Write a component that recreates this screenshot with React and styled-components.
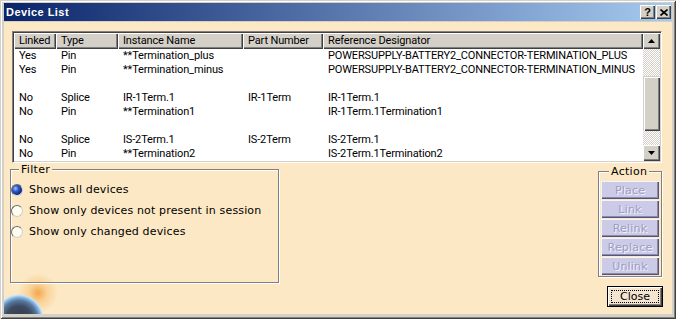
import React from 'react';
import styled, { createGlobalStyle } from 'styled-components';

const Global = createGlobalStyle`
  html, body { margin: 0; padding: 0; background: #ffffff; }
  body { font-family: "DejaVu Sans", sans-serif; }
  * { box-sizing: border-box; }
`;

const COLS = '42px 62px 125px 80px 320px';

const Window = styled.div`
  width: 676px;
  height: 319px;
  padding: 3px 4px 5px 4px;
  background: #d4d0c8;
  box-shadow: inset 1px 1px 0 #d4d0c8, inset -1px -1px 0 #404040,
    inset 2px 2px 0 #ffffff, inset -2px -2px 0 #808080;
  display: flex;
  flex-direction: column;
`;

const TitleBar = styled.div`
  height: 18px;
  margin-bottom: 1px;
  display: flex;
  align-items: center;
  gap: 1px;
  padding: 0 1px 0 2px;
  background: linear-gradient(to right, #0a246a, #a6caf0);
`;

const Title = styled.div`
  flex: 1;
  color: #ffffff;
  font: bold 11px "Liberation Sans", Arial, sans-serif;
  letter-spacing: 0.45px;
`;

const CaptionButton = styled.div`
  width: 15px;
  height: 14px;
  display: grid;
  place-items: center;
  background: #d4d0c8;
  box-shadow: inset 1px 1px 0 #ffffff, inset -1px -1px 0 #404040,
    inset -2px -2px 0 #808080;
  font: bold 11px "Liberation Sans", Arial, sans-serif;
  color: #000;
  line-height: 14px;
`;

const Client = styled.div`
  flex: 1;
  display: flex;
  flex-direction: column;
  background-color: #fce8c5;
  background-image:
    radial-gradient(circle 25px at 15px 297px, #343a46 0, #3e4a60 52%, #56789f 74%, #86b6e0 87%, #c4e4f8 95%, rgba(252,232,197,0) 100%),
    radial-gradient(circle 20px at 34px 271px, rgba(242,150,45,0.8) 0, rgba(247,188,105,0.5) 45%, rgba(252,232,197,0) 100%);
  background-repeat: no-repeat;
`;

const ListBox = styled.div`
  margin: 9px 0 0 8px;
  width: 650px;
  height: 132px;
  padding: 1px;
  border: 1px solid;
  border-color: #808080 #ffffff #ffffff #808080;
  box-shadow: inset 1px 1px 0 #404040, inset -1px -1px 0 #d4d0c8;
  background: #ffffff;
  display: flex;
  overflow: hidden;
`;

const Table = styled.div`
  flex: 1;
  display: flex;
  flex-direction: column;
  overflow: hidden;
  font: 11px Roboto, "Liberation Sans", sans-serif;
  letter-spacing: -0.15px;
  color: #000;
`;

const HeaderRow = styled.div`
  display: grid;
  grid-template-columns: ${COLS};
  height: 16px;
  flex: none;
`;

const HeaderCell = styled.div`
  background: #d4d0c8;
  box-shadow: inset 1px 1px 0 #ffffff, inset -1px -1px 0 #404040,
    inset -2px -2px 0 #808080;
  line-height: 16px;
  padding-left: 5px;
  white-space: nowrap;
  overflow: hidden;
`;

const Row = styled.div`
  display: grid;
  grid-template-columns: ${COLS};
  height: 14px;
  line-height: 14px;
  flex: none;
`;

const Cell = styled.div`
  padding-left: 5px;
  white-space: nowrap;
  overflow: visible;
`;

const ScrollBar = styled.div`
  width: 17px;
  display: flex;
  flex-direction: column;
`;

const ScrollButton = styled.div`
  height: 16px;
  flex: none;
  display: grid;
  place-items: center;
  background: #d4d0c8;
  box-shadow: inset 1px 1px 0 #ffffff, inset -1px -1px 0 #404040,
    inset -2px -2px 0 #808080;
`;

const Track = styled.div`
  flex: 1;
  background-color: #ffffff;
  background-image: conic-gradient(#d4d0c8 25%, #ffffff 0 50%, #d4d0c8 0 75%, #ffffff 0);
  background-size: 2px 2px;
`;

const Thumb = styled.div`
  margin-top: ${(p) => p.$offset}px;
  height: ${(p) => p.$size}px;
  background: #d4d0c8;
  box-shadow: inset 1px 1px 0 #d4d0c8, inset 2px 2px 0 #ffffff,
    inset -1px -1px 0 #404040, inset -2px -2px 0 #808080;
`;

const Lower = styled.div`
  display: flex;
  justify-content: space-between;
  align-items: flex-start;
  margin-top: 0;
  padding: 0 9px 0 6px;
`;

const Group = styled.fieldset`
  margin: 0;
  min-width: 0;
  border: 1px solid #808080;
  box-shadow: 1px 1px 0 #ffffff, inset 1px 1px 0 #ffffff;
  font: 11px "DejaVu Sans", Verdana, sans-serif;
  color: #000;
`;

const FilterGroup = styled(Group)`
  width: 269px;
  height: 120px;
  padding: 3px 0 0 0;
`;

const ActionGroup = styled(Group)`
  width: 64px;
  margin: 2px 1px 0 0;
  padding: 3px 2px 1px 2px;
  display: flex;
  flex-direction: column;
  gap: 1px;
`;

const Legend = styled.legend`
  margin-left: 8px;
  padding: 0 2px;
  line-height: 13px;
  font: 11px "DejaVu Sans", Verdana, sans-serif;
  letter-spacing: 0.3px;
  background: #fce8c5;
`;

const RadioRow = styled.label`
  display: flex;
  align-items: center;
  gap: 6px;
  height: 21px;
  white-space: nowrap;
  letter-spacing: 0.15px;
`;

const Radio = styled.span`
  width: 12px;
  height: 12px;
  flex: none;
  border-radius: 50%;
  border: 1px solid;
  border-color: #6a6a6a #cfcfcf #cfcfcf #6a6a6a;
  background: ${(p) =>
    p.$checked
      ? 'radial-gradient(circle at 35% 35%, #9fc0ff 0, #2a55c8 35%, #0b2270 75%, #061444 100%)'
      : '#fffdf0'};
`;

const ActionButton = styled.div`
  height: 18px;
  display: grid;
  place-items: center;
  background: #cbcbe7;
  box-shadow: inset 1px 1px 0 #f4f4ff, inset -1px -1px 0 #55557a,
    inset -2px -2px 0 #8a8aae;
  color: #9d9dc2;
  text-shadow: 1px 1px 0 #f4f4ff;
  font: 11px "DejaVu Sans", Verdana, sans-serif;
  letter-spacing: 0.2px;
`;

const RightColumn = styled.div`
  display: flex;
  flex-direction: column;
  align-items: flex-end;
`;

const CloseButton = styled.div`
  margin-top: 9px;
  width: 56px;
  height: 21px;
  padding: 3px;
  border: 1px solid #000;
  background: #f3e5cf;
  box-shadow: inset 1px 1px 0 #ffffff, inset -1px -1px 0 #404040,
    inset -2px -2px 0 #808080;
  display: flex;
`;

const FocusRect = styled.div`
  flex: 1;
  border: 1px dotted #000;
  display: grid;
  place-items: center;
  font: 11px "DejaVu Sans", Verdana, sans-serif;
  color: #000;
  line-height: 11px;
`;

const Arrow = ({ down }) => (
  <svg width="7" height="4" viewBox="0 0 7 4">
    <path d={down ? 'M0 0H7L3.5 4Z' : 'M0 4H7L3.5 0Z'} fill="#000" />
  </svg>
);

const rows = [
  ['Yes', 'Pin', '**Termination_plus', '', 'POWERSUPPLY-BATTERY2_CONNECTOR-TERMINATION_PLUS'],
  ['Yes', 'Pin', '**Termination_minus', '', 'POWERSUPPLY-BATTERY2_CONNECTOR-TERMINATION_MINUS'],
  ['', '', '', '', ''],
  ['No', 'Splice', 'IR-1Term.1', 'IR-1Term', 'IR-1Term.1'],
  ['No', 'Pin', '**Termination1', '', 'IR-1Term.1Termination1'],
  ['', '', '', '', ''],
  ['No', 'Splice', 'IS-2Term.1', 'IS-2Term', 'IS-2Term.1'],
  ['No', 'Pin', '**Termination2', '', 'IS-2Term.1Termination2'],
];

const headers = ['Linked', 'Type', 'Instance Name', 'Part Number', 'Reference Designator'];

const filters = [
  'Shows all devices',
  'Show only devices not present in session',
  'Show only changed devices',
];

const actions = ['Place', 'Link', 'Relink', 'Replace', 'Unlink'];

export default function App() {
  return (
    <>
      <Global />
      <Window>
        <TitleBar>
          <Title>Device List</Title>
          <CaptionButton>?</CaptionButton>
          <CaptionButton>
            <svg width="8" height="7" viewBox="0 0 8 7">
              <path d="M0.5 0.5L7.5 6.5M7.5 0.5L0.5 6.5" stroke="#000" strokeWidth="1.6" />
            </svg>
          </CaptionButton>
        </TitleBar>
        <Client>
          <ListBox>
            <Table>
              <HeaderRow>
                {headers.map((h) => (
                  <HeaderCell key={h}>{h}</HeaderCell>
                ))}
              </HeaderRow>
              {rows.map((r, i) => (
                <Row key={i}>
                  {r.map((c, j) => (
                    <Cell key={j}>{c}</Cell>
                  ))}
                </Row>
              ))}
            </Table>
            <ScrollBar>
              <ScrollButton>
                <Arrow />
              </ScrollButton>
              <Track>
                <Thumb $offset={27} $size={55} />
              </Track>
              <ScrollButton>
                <Arrow down />
              </ScrollButton>
            </ScrollBar>
          </ListBox>
          <Lower>
            <FilterGroup>
              <Legend>Filter</Legend>
              {filters.map((f, i) => (
                <RadioRow key={f}>
                  <Radio $checked={i === 0} />
                  {f}
                </RadioRow>
              ))}
            </FilterGroup>
            <RightColumn>
              <ActionGroup>
                <Legend>Action</Legend>
                {actions.map((a) => (
                  <ActionButton key={a}>{a}</ActionButton>
                ))}
              </ActionGroup>
              <CloseButton>
                <FocusRect>Close</FocusRect>
              </CloseButton>
            </RightColumn>
          </Lower>
        </Client>
      </Window>
    </>
  );
}
